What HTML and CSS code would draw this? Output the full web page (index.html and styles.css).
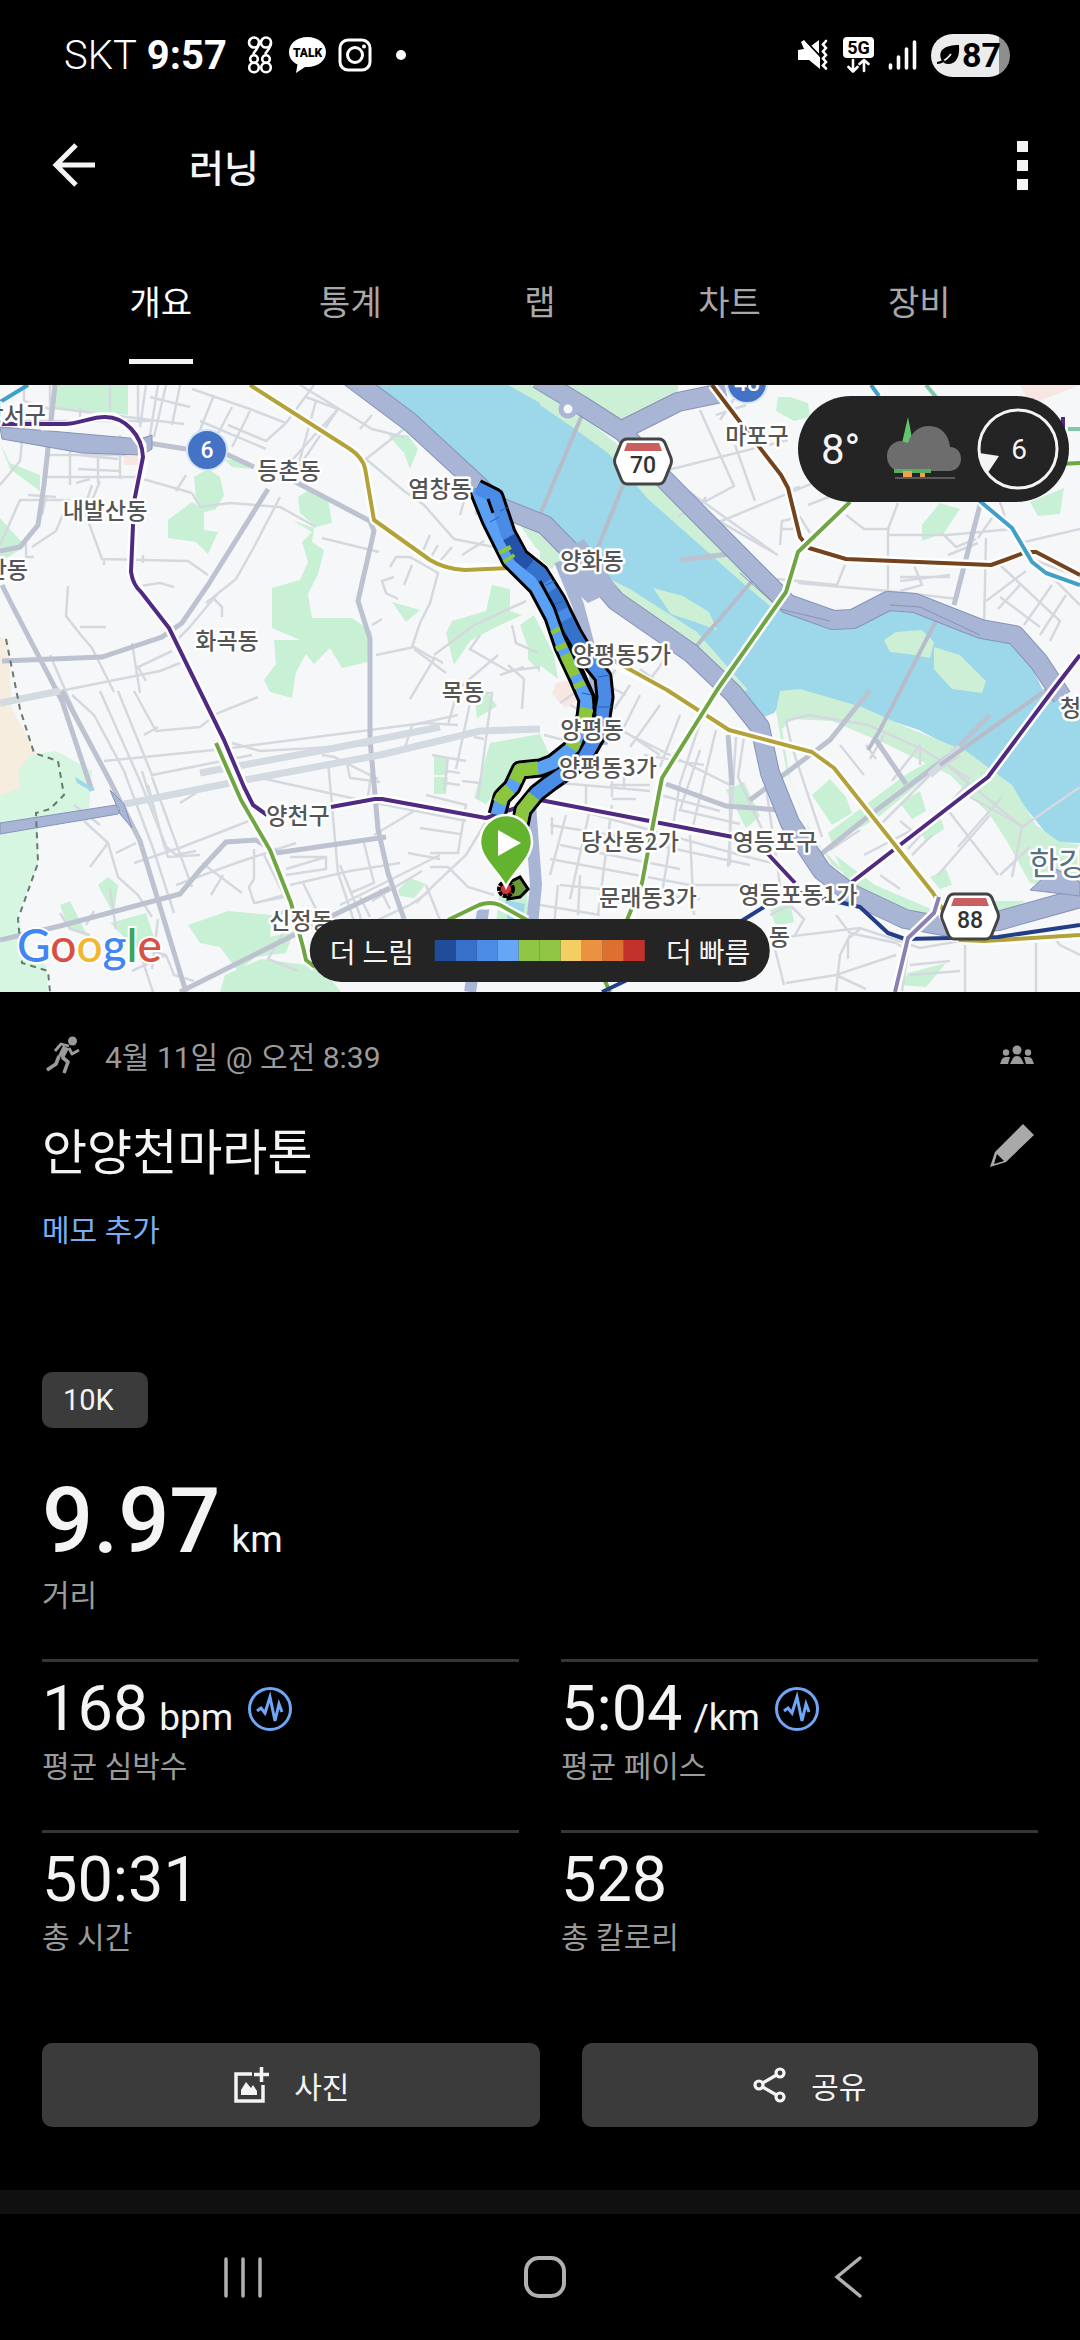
FILE: index.html
```html
<!DOCTYPE html>
<html lang="ko">
<head>
<meta charset="UTF-8">
<meta name="viewport" content="width=device-width, initial-scale=1.0">
<title>러닝</title>
<link rel="stylesheet" href="styles.css">
</head>
<body>

<div class="status-bar">
    <div class="status-left">
        <span class="carrier">SKT</span>
        <span class="clock">9:57</span>
        <svg class="icon-9988" width="26" height="38" viewBox="0 0 26 38" fill="none" stroke="#fff" stroke-width="2.6">
            <circle cx="7" cy="6.500" r="5"/><path d="M12 7c0 4-3 7-6 11"/>
            <circle cx="19" cy="6.500" r="5"/><path d="M24 7c0 4-3 7-6 11"/>
            <circle cx="7" cy="23" r="3.800"/><circle cx="7" cy="31.500" r="4.800"/>
            <circle cx="19" cy="23" r="3.800"/><circle cx="19" cy="31.500" r="4.800"/>
        </svg>
        <svg class="icon-talk" width="37" height="38" viewBox="0 0 37 38">
            <path fill="#fff" d="M18.500 1C8 1 0 7.500 0 16c0 5.500 3.300 10 8.500 12.600L7 37l9-6h2.500C29 31 37 24.500 37 16S29 1 18.500 1z"/>
            <text x="18.500" y="21" text-anchor="middle" class="talk-text">TALK</text>
        </svg>
        <svg width="34" height="34" viewBox="0 0 34 34" fill="none" stroke="#fff" stroke-width="3">
            <rect x="2" y="2" width="30" height="30" rx="8"/>
            <circle cx="17" cy="17" r="7.500"/>
            <circle cx="26" cy="8.500" r="2" fill="#fff" stroke="none"/>
        </svg>
        <span class="more-dot"></span>
    </div>
    <div class="status-right">
        <svg width="31" height="32" viewBox="0 0 31 32">
            <path fill="#fff" d="M0 11l6-1L3 3l3-2 16 17v12L11 21H0zM13 7l8-6v14z"/>
            <path fill="none" stroke="#fff" stroke-width="2.600" stroke-linecap="round" d="M28 2l-3 3.500 3 3.500-3 3.500 3 3.500-3 3.500 3 3.500-3 3.500 3 3"/>
            <path stroke="#000" stroke-width="1.500" d="M8 2l15 16"/>
        </svg>
        <svg width="31" height="36" viewBox="0 0 31 36">
            <rect width="31" height="21" rx="4" fill="#fff"/>
            <text x="15.500" y="17" text-anchor="middle" class="net-text">5G</text>
            <path fill="none" stroke="#fff" stroke-width="2.600" stroke-linecap="round" stroke-linejoin="round" d="M10 23v11M5.500 30l4.500 4.500 4.500-4.500M21 34V23M16.500 27l4.500-4 4.500 4"/>
        </svg>
        <svg width="29" height="30" viewBox="0 0 29 30" stroke="#fff" stroke-width="3.600" stroke-linecap="round">
            <path d="M2.500 25v3M10.500 17v11M18.500 9v19M26.500 2v26"/>
        </svg>
        <span class="battery">
            <svg width="23" height="22" viewBox="0 0 23 22">
                <path fill="#000" d="M4 15C1 6 8 1 22 1c1 12-3 19-11 19-2 0-4-1-5-2z"/>
                <path fill="none" stroke="#eee" stroke-width="1.800" d="M4 18c3-1 7-4 10-8"/>
                <path fill="none" stroke="#000" stroke-width="2.200" d="M0 19c3 0 5-1 7-3"/>
            </svg>
            <span>87</span>
        </span>
    </div>
</div>

<header class="app-bar">
    <button class="icon-btn" aria-label="뒤로">
        <svg width="44" height="44" viewBox="0 0 44 44" fill="none" stroke="#f4f4f4" stroke-width="5">
            <path d="M43 22H5M24 2L4 22l20 20"/>
        </svg>
    </button>
    <h1>러닝</h1>
    <button class="icon-btn" aria-label="더보기">
        <svg width="11" height="49" viewBox="0 0 11 49" fill="#f4f4f4">
            <path d="M0 0h11v11H0zM0 19h11v11H0zM0 38h11v11H0z"/>
        </svg>
    </button>
</header>

<nav class="tabs">
    <a href="#" class="active">개요</a>
    <a href="#">통계</a>
    <a href="#">랩</a>
    <a href="#">차트</a>
    <a href="#">장비</a>
</nav>

<div class="map">
    <svg class="map-canvas" viewBox="0 0 1080 607" preserveAspectRatio="xMidYMid slice">
        <rect width="1080" height="607" fill="#f6f7f8"/>

        <!-- residential blocks on the west edge -->
        <path fill="#f6eddf" d="M0 252l8 2 4 70 16 28 14 24-12 26-30 10z"/>
        <path fill="#f8e6e3" d="M124 62h14v18h-14zM1020 0h60l-50 20zM556 298l16-3 4 20-10 8-14-14z"/>

        <!-- parks -->
        <g fill="#c8f0d4">
            <path d="M54 0h74v30l-74-7z"/>
            <path d="M0 58l10 20 30 12v16l-30-22zM0 133l16 18 10 10-26 16z"/>
            <path d="M194 92l14-8 12 8 4 18-8 14-14 4-6-14zM192 117l12 8v20l14 2-10 22-12-12-28-4v-18zM224 74l20 2 6 8-18-2z"/>
            <path d="M298 112l12-8 18 10 4 24-16 4-16-14zM292 135l22 8-2 14 12 8-6 24-10 20 4 24h40l20 14-4 30-26 6-12-20-16 16-8-10-10 18-4 26-22-6-6-12 12-16-2-24h26l-28-12v-40l28-8 8-18-6-20 10-10z"/>
            <path d="M388 50h20l10 14-8 20-6-16zM392 217l28 8-14 12zM452 236l34-10 6-26 18 4v22l12 4-30 14-22 12-16 24-8-32z"/>
            <path d="M520 240l14-10 20 40 4 24-26-20zM528 262l12-8v34l-12-14zM475 315l12-8 10 14-20 12zM490 358l50-9 12 26-50 24-16 20-12-6z"/>
            <path d="M30 370l26-4 36 20-4 50 -50 5-14-10-6-44zM0 410l24-8 14 38 0 40-20 50 8 40 20 10 2 27H0z" fill="#d7f6e2"/>
            <path d="M98 500l10-8 10 8-4 30zM60 520l10-4 18 36-20-10zM110 538l36-10 8 24-20 10zM188 540l40-14 44 4-2 22 24-6-8 22-30 4-18 14-18-24-20-4zM225 590l36-16 60 8 20 25H220z"/>
            <path d="M434 372h14v18h-14zM434 392h14l-2 17h-12zM398 505l12-12 16 6-12 14-14-2z"/>
            <path d="M726 405l18-8 16 34-14 12z" />
            <path d="M500 500h26l4 40h-34z"/>
            <path d="M778 12l12 0 18 6 2 14-16 4-18-10zM922 140l18-22 20 6-16 24-22 8zM1030 117l34-14-4 26-22 2z"/>
            <path d="M770 525l20-8 4 20-18 4zM908 588l38-10-20 24-26-2z"/>
        </g>

        <!-- river -->
        <path fill="#9cd7ea" d="M361 0H540V18L581 37 623 78 657 110 753 193 784 222 833 240 850 239 884 223 912 223 974 252 1008 257 1032 283 1043 305 1080 330V458L1053 457 1025 422 970 372 919 345 850 322 788 308 774 328 764 332 733 305 691 262 616 205 580 172 540 133 475 97 410 37z"/>
        <path fill="#ccefd6" d="M508 0H578L640 0 678 0V18L640 38 612 44 581 38 540 18z"/>
        <path fill="#ccefd6" d="M540 8L581 30 616 58 653 98 753 190 784 222 776 226 745 200 648 114 608 68 575 44 540 20zM606 192L630 204 697 247 748 305 733 308 691 268 616 213z"/>
        <path fill="#ccefd6" d="M653 203l30 8 26 16 8 18-22-8-24-8zM884 255l12-8 26-2 12 12-4 16-22-4-18-2zM934 262l26 8 26 26-4 12-30-4-18-20z"/>
        <path fill="#ccefd6" d="M510 125l26 10 28 30 16 26-20-10-24-18-14-20zM540 150l20 22-8 12-12-10z"/>
        <path fill="#ccefd6" d="M776 326l4-20 20-2 62 18 44 20 60 24 46 34 24 40 22 16 22 4v42l-50-4-22-40-18-28-40-40-66-32-52-22-40-2-10 10 8 50 22 60 40 40-20-14-26-42-20-54z"/>
        <path fill="#c8f0d4" d="M812 410l18-16 16 18 6 16-20 12zM828 448l80-60 26-14 12 2-70 58-44 24zM900 418l20-12 6 20-14 8zM918 444l22-14 4 14-18 12zM930 492l16-8 6 16-12 4zM835 470l40 30 70 30 20-14 60 0-20 14-80 12-70-28z"/>

        <!-- minor streets -->
        <g class="street">
            <path d="M0 36h150M50 0v50M24 0v16l26 8M80 22v12M110 0v30M138 0v38M146 0l-6 42M158 0l-8 50M166 0l-12 52M54 23l130 16M70 50v50M98 50v48M120 50v44M46 70h80M46 92h90l56 16M48 50l100 6M78 70l40 4M78 84l42 2"/>
            <path d="M180 0l-8 40M150 12l40 10M192 4l58 20 36 14M214 10l-16 40M232 22l-20 38M250 26l-18 36M286 38l-20 18-38-16M200 36l66 28M306 12l32 12-54 60M338 24l-50 74M286 38l28-38M300 0l72 44 32 8M372 30l-12 14M404 44l-38 30 38 32 20 14 30 34 40 8"/>
            <path d="M316 16l-16 58-12 24M0 100l20-24 4-40M28 110l28 2M46 112l-4 18M186 90l-10 16M192 108l8 14 30-4 50 4 36 20M0 160l20-45 50 0M26 158l0 14 8 0M32 162l24-16 10-24"/>
            <path d="M76 98l14-4M100 96l-14 34 16 44 86 2 20 14M104 174v6M143 170v8M68 201l-2 30 14 18 12 14 22 44M80 242h26M92 100l-6 18M140 201l20-3 14 4M280 112l-26 50-18 32-30 24M214 214l8 8v10M220 206l-32 38-10 10M132 258l8 50M172 266l-34 16 8 14M60 306l100-20 20-8"/>
            <path d="M322 153l57 14M430 150l-8 18M438 160l-8 14M452 162l-12 14M390 182l6-10 14 0 28 16-8 30-10 20-8 24M412 180l-8 20M394 192l-12 4 4 12 12 6M372 240l10-6M376 270l38-8 20 12-24 40M414 264l32 24M434 270l40-30 52-24M480 250l-10 14 38 22 32-4M512 240l4 18 22 10M433 272l10 6"/>
            <path d="M462 170l22-14M460 130l4-14 12-6 0 20"/>
            <path d="M50 270l26 60M72 310l22 20 30 56 30 80 20 62M100 306l40 90 28 70M118 306l34 84 100-20M134 306l22 40 44-4 18-14 40-16M144 350l14-8M104 376l120-12 200-26 34 2M152 392l40 110M232 358l28 8 110-6M322 370l12 2 44 22M256 392l100 22 110 22M346 373l4 20 30 4M328 376l10 112 30 90M372 385l-4 26"/>
            <path d="M180 418l16-10M84 436l24 22 10 34 20 18 14 22M108 458l-18 24M116 468l20-10M134 478l48-16 72-28M100 440l-26-20M142 386l26 86 32-2M148 400l16 60 12 10 20-4M176 500l60-22 60-20M202 478l40 30M223 490l-12 20M254 464v30l-5 8 5 16 30-6M264 470l20 40-28 8M290 472h36v12l-40 6M286 484l40-12M290 500l60-14 50-8M302 496l30 60M340 480l20 50 6 44M364 458l10 40-24 10M286 522l-12 16"/>
            <path d="M60 528l10 16 20 6M86 540l8-14M110 504l6 40M130 560l36 10 8 20 20 6M158 534l-6 50M134 550l20 60M166 570l-34 16M284 546l-16 28 30 12M300 558l8 20"/>
            <path d="M458 330l-46 10-8 26M448 340l10-36 40-34M508 280l16 14-2 30M500 290l24-8"/>
            <path d="M432 370l34 6M448 372l-4 34M446 386l14 2M446 398l14 2M470 318l-14 66M474 308l18 0-14 106M474 352l10 2M462 396l18 2M420 443l40 6M426 410l40 10-8 48-28 0M408 468l32 6M424 420l-50 30M490 430l-24 40-32 30-18 18"/>
            <path d="M430 482l18 0 20 20 26 8M426 500l20 50M340 520l100-50M360 512l10 20M380 504l10 20M350 548l60-28 20-14M372 516l50-30"/>
        </g>
        <g class="street">
            <path d="M544 350l40 10M570 320l160 80M640 310l-20 40M660 320l-30 42M600 330l60 40M680 330l-20 52M700 338l-20 60-18 110M716 345l-24 100M736 352l-8 130M560 420l180 50 40 10M550 440l60 10 140 30M550 474l140 26 110 0M560 500l140 14M566 430l-16 60M590 424l-20 90M612 420l-14 110M560 460l120 24M690 450l4 80M730 360v120M560 398l90 8M610 400h40M612 390v22M624 380v24M586 400v20M552 432v18M660 410l60 16M644 370l60 10M612 414l24 0"/>
            <path d="M760 360l20 140M744 352l-6 40 32 70M700 365l-20 60 60 14M540 520l60 10M558 500l-4 40M580 490l-2 40"/>
            <path d="M560 318l26-18 12 12M612 290l14-22M606 300l20 10M630 300l-16 24M640 284l40 30M668 270l-16 22"/>
        </g>
        <g class="street">
            <path d="M668 85l120-30M700 25l34 76-56 30M716 30l30-10M740 5l-20 30M735 60l20 56M712 140l130-54M786 106l14-4M670 93l106 76M706 112l-8 12 80 46M780 160l2-24 18-4 10 16M782 144l16 0"/>
            <path d="M808 120l26-10M846 130l18 14h26M898 118l-10 26v70M845 180l-8 20-60-6M798 198l90 8 70 8M888 150h60l64-6M986 153l-2 90M942 148l14 14 20-8M948 170l30-12M950 190l-50 6M978 153l14-20M914 180l8 20-22 6M900 192h50M1000 117l10 30"/>
            <path d="M1080 144l-60 14M1026 172l54 20M1026 186l-40 30M1000 180l60 56-10 20M1040 180l40 40M1052 200l-28 40M1066 210l-26 40M1000 212l40 30M1020 200l-22 24"/>
        </g>
        <g class="street">
            <path d="M786 336l6 26 30 90M786 336l22-6 60 10 54 24 48 30M840 360l24 30M866 360l10 14M884 350l-14 24M920 360l-28 36M940 380l-60 60M942 376l80 66-10 50M968 398l-60 66M920 360l0 20M1024 442l-54-30M944 420l54 70M990 430l-52 60M1002 412l-44 50M1022 442l58-40M912 470l20-20M880 490l20 14M940 384l20-14M900 436l20 16M864 470l46-24M830 465l30-20M1000 490l30-28"/>
            <path d="M836 530l14 18 46 10 12 8-6 40M850 550l-10 20-4 36M896 570l-60 20-50 8M836 590l30 14M640 595l30-18 40-16 150-18 60 20 46-8M965 560v47M1036 558v49M1080 570l-20-10-10-12M910 580l40-4M910 590l50-4M860 544l-12 10 0 20"/>
            <path d="M770 530l20-10 14 14-10 18M774 560l10 40"/>
        </g>

        <!-- arterial roads -->
        <g class="road">
            <path d="M148 58l38 6M224 68l30 14M290 94l80 42 4 10-16 70 12 38v100l8 90 10 44 16 46"/>
            <path d="M55 0L44 100l-6 40-18 22-20 4M268 104l-60 96-26 38-20 14-60 20-100 4M2 200l10 20 50 96 30 90"/>
            <path d="M62 306l48 90 30 60 46 151M0 555l60-14 120-32 20-24 26-28 30-2 20 12M276 468l110-16M180 607l160-80 50-24"/>
            <path d="M666 399l60 22 54 4M820 470l50-40 80-60 40-40M750 415l80-60 40-50M876 355l30 44M728 350l4 50"/>
            <path d="M980 120l-26 100M680 175l48-6"/>
        </g>
        <path class="wide-road" d="M120 420l120-24 140-26 100-24 60-2M0 318l60-12M200 388l140-26 100-20"/>
        <path class="wide-road" d="M930 390l30-28"/>

        <!-- bridges -->
        <g class="bridge">
            <path d="M582 30l-42 100M623 100l-30 75M753 195l-60 70M938 232L880 345l-12 20M1046 305L940 380"/>
        </g>

        <!-- expressways -->
        <g class="highway-edge">
            <path d="M350-8L410 37 475 97 500 122 545 140 592 188 616 216 691 268 733 308 760 342 770 388 790 438 822 486 850 508 905 534 943 541 998 536 1080 513"/>
            <path d="M538-6L581 20 623 47 660 90 753 184 788 219 833 235 853 234 888 216 915 218 981 244 1015 250 1039 277 1062 312"/>
            <path d="M626 43L678 17 726 7"/>
        </g>
        <g class="highway">
            <path d="M350-8L410 37 475 97 500 122 545 140 592 188 616 216 691 268 733 308 760 342 770 388 790 438 822 486 850 508 905 534 943 541 998 536 1080 513"/>
            <path d="M538-6L581 20 623 47 660 90 753 184 788 219 833 235 853 234 888 216 915 218 981 244 1015 250 1039 277 1062 312"/>
            <path d="M626 43L678 17 726 7"/>
        </g>
        <path fill="#a9b5d4" stroke="#8793b8" d="M0 42l50 4 90 8 12-4v14l-10 6-60-2-80-14zM0 438l116-18q6 3 2 9l-118 20zM110 405l10 24 12 14-8-24zM1030 505l24-22 26 14v14z"/>
        <path class="highway highway-sm" d="M560 176l18 44 16 60 8 80M530 420l6 80-6 60M484 520l-14 87"/>
        <path fill="#a9b5d4" d="M560 168l24-14 34 50-30 14-22-20z"/>
        <path d="M740 188l40 36 50 12M890 220l30 2 60 28" stroke="#8793b8" fill="none"/>
        <circle cx="568" cy="24" r="7" fill="#f6f7f8" stroke="#a9b5d4" stroke-width="5"/>
        <path fill="none" stroke="#667a70" stroke-width="2" stroke-dasharray="6 5" d="M6 254l14 70 14 44 24 8 6 34-14 14-14 4 2 50-20 56 4 44 26 8 2 21"/>
        <path fill="#9cd7ea" d="M75 392l20 12-4 2-14-8zM505 515l20 4-4 26h-12z"/>

        <!-- subway lines -->
        <g class="subway">
            <path stroke="#fff" class="casing" d="M41 41H64L96 32H114L129 42 142 60 143 80 134 117 131 187 141 207 169 243 224 355 244 402 253 420 267 430M331 422L375 414H382L486 433 516 423 540 415 733 452M767 468L795 498M852 497L988 392 1053 305 1080 270"/>
            <path stroke="#4f2a80" d="M0 39H64C80 39 90 32 105 32C125 32 142 50 143 72L134 117 131 187Q133 200 141 207L169 243 224 355 244 402 253 420 267 430M331 422L375 414H382L486 433 516 423 540 415 733 452M767 468L795 498M852 497L988 392 1053 305 1080 270"/>
            <path stroke="#fff" class="casing" d="M250 0L356 68 365 83 374 135 430 175 448 183 510 183M600 272L667 305 729 345 812 367 834 383 933 508 953 552 984 556 1080 550"/>
            <path stroke="#b3a239" d="M250 0L350 64Q362 72 365 83L374 135 430 175Q445 184 465 185L510 183M600 268L667 305 729 345 812 367 834 383 933 508 943 525 960 555 984 556 1080 550"/>
            <path stroke="#fff" class="casing" d="M712 0L740 37 781 90 788 103 800 152 809 163 846 174 991 180 1026 167H1036L1080 190"/>
            <path stroke="#74421d" d="M712 0L740 37 781 90 788 103 800 152 809 163 846 174 991 180 1005 175 1026 167H1036L1080 190"/>
            <path stroke="#fff" class="casing" d="M850 117L798 167 786 207 717 305 662 393 659 408 642 498 629 535M216 358L241 415 270 465 291 518 303 562 306 575 315 582M448 535L479 520H499L527 535"/>
            <path stroke="#6fa644" d="M850 117L798 167 786 207 717 305 662 393 659 408 642 498 625 540 600 585 610 607M216 358L241 415 270 465 291 518 303 562 306 575 315 582M448 535L479 520Q490 516 500 520L527 535M1060 79L1080 78"/>
            <path stroke="#fff" class="casing" d="M871 0L879 11M981 117L1012 143 1032 177 1046 188 1080 200"/>
            <path stroke="#41a0c8" d="M28 0L0 17M871 0L879 11M975 112L1012 143 1032 177 1046 188 1080 200"/>
            <path stroke="#233e86" d="M602 607L623 597 743 535 764 522M800 508L860 522 888 548 905 554 998 552 1080 540"/>
            <path stroke="#fff" class="casing" d="M939 512L934 528 908 553 895 607"/>
            <path stroke="#8a82b5" d="M939 512L934 528 908 553 895 607"/>
            <path stroke="#4f2a80" d="M1063 32V60"/>
            <path stroke="#7fc8a8" d="M926 0L936 12M1068 44H1080"/>
        </g>

        <!-- run track, coloured by pace -->
        <g fill="none" stroke-linejoin="round">
            <path class="track-edge" d="M477 103L495 112 507 148 520 172 540 188 557 215 573 248 587 272 603 292 605 312 600 345 583 375 550 398 537 408 523 425 520 440"/>
            <path class="track-edge" d="M477 103L490 135 510 175 537 202 553 232 563 262 577 292 587 315 585 332 573 362 553 378 540 383 520 385 512 402 502 412 497 430"/>
            <path class="track" stroke="#5aa0f5" d="M477 103L490 135 510 175 537 202 553 232 563 262 577 292 587 315 585 332 573 362 553 378 540 383 520 385 512 402 502 412 497 430"/>
            <path class="track" stroke="#4a8be6" d="M477 103L495 112 507 148 520 172 540 188 557 215 573 248 587 272 603 292 605 312 600 345 583 375 550 398 537 408 523 425 520 440"/>
            <path class="track" stroke="#2352a8" d="M509 152L520 172 530 180"/>
            <path class="track" stroke="#3572cc" d="M530 180L540 188 546 197M551 206L557 215 562 225M566 235L573 248 580 260"/>
            <path class="track" stroke="#8cc63f" d="M504 163L506 167M508 172L510 175M556 243L558 247M561 259L563 264M566 269L576 290M579 297L581 302M587 323L585 332 583 338M576 355L571 363M538 383L520 385 515 396M510 404L502 412 499 418M534 411L523 425 520 440"/>
            <path class="track" stroke="#f3cf63" d="M583 343L581 348"/>
            <path stroke="#245eb5" d="M490 137l9-5M500 126l9-4M546 200l9-4M553 220l10-4M582 308l10 2M592 322l20 0M598 292l12-2M560 390l5 9"/>
            <path class="track-gap" d="M488 114l5 14M540 196l14 26 10 28 14 30 15 30 2 20-4 26"/>
        </g>
        <path fill="#6a9a3a" stroke="#000" stroke-width="3" d="M508 498l12-6 8 12-8 8-12 2z"/>
        <circle cx="506" cy="504" r="7" fill="#d0393a" stroke="#000" stroke-width="4" stroke-dasharray="4 1"/>
        <path fill="#64b32f" stroke="#fff" stroke-width="2.500" d="M506 502C500 488 480 474 480 457a26 27 0 0 1 52 0C532 474 512 488 506 502z"/>
        <path fill="#fff" d="M498 445l23 13-23 13z"/>

        <!-- place names -->
        <g class="place" text-anchor="middle">
            <text x="46" y="38" text-anchor="end">강서구</text>
            <text x="289" y="94">등촌동</text>
            <text x="440" y="112">염창동</text>
            <text x="105" y="134">내발산동</text>
            <text x="28" y="193" text-anchor="end">산동</text>
            <text x="227" y="264">화곡동</text>
            <text x="463" y="315">목동</text>
            <text x="592" y="184">양화동</text>
            <text x="622" y="278">양평동5가</text>
            <text x="592" y="353">양평동</text>
            <text x="608" y="391">양평동3가</text>
            <text x="298" y="439">양천구</text>
            <text x="301" y="544">신정동</text>
            <text x="630" y="465">당산동2가</text>
            <text x="648" y="521">문래동3가</text>
            <text x="775" y="465">영등포구</text>
            <text x="798" y="518">영등포동1가</text>
            <text x="790" y="560" text-anchor="end">동</text>
            <text x="757" y="59">마포구</text>
            <text x="1060" y="331" text-anchor="start">청</text>
            <text x="1029" y="490" text-anchor="start" class="river-name">한강</text>
        </g>

        <!-- route shields -->
        <g class="route-no" text-anchor="middle">
            <circle cx="207" cy="65" r="20" fill="#4472c4" stroke="#cfe3fb" stroke-width="2"/>
            <text x="207" y="73" fill="#fff">6</text>
            <circle cx="747" cy="-2" r="20" fill="#4472c4" stroke="#cfe3fb" stroke-width="2"/>
            <text x="747" y="6" fill="#fff">48</text>
            <path class="shield" d="M627 54h32q4 0 6 4l6 15q1 3 0 6l-6 15q-2 5-6 5h-32q-4 0-6-5l-6-15q-1-3 0-6l6-15q2-4 6-4z"/>
            <path fill="#c9605f" d="M627 58h32l3 8h-38z"/>
            <text x="643" y="88" fill="#333">70</text>
            <path class="shield" d="M954 509h32q4 0 6 4l6 15q1 3 0 6l-6 15q-2 5-6 5h-32q-4 0-6-5l-6-15q-1-3 0-6l6-15q2-4 6-4z"/>
            <path fill="#c9605f" d="M954 513h32l3 8h-38z"/>
            <text x="970" y="543" fill="#333">88</text>
        </g>

        <text class="map-brand" x="17" y="577"><tspan fill="#4285f4">G</tspan><tspan fill="#d94f43">o</tspan><tspan fill="#f2b632">o</tspan><tspan fill="#4285f4">g</tspan><tspan fill="#3aa757">l</tspan><tspan fill="#d94f43">e</tspan></text>
    </svg>

    <div class="weather">
        <span class="temp">8°</span>
        <svg width="76" height="64" viewBox="0 0 76 64">
            <path fill="#63c46c" d="M21 0l5 26H15z"/>
            <path fill="#6d6d6d" d="M13 54C5 54 0 47 0 39s6-15 14-15l7 2C24 16 31 9 42 9c12 0 20 9 21 21 7 0 11 5 11 12s-5 12-12 12z"/>
            <path fill="#57b060" d="M7 52h37v4H7z"/>
            <path fill="#f2a04a" d="M16 54h9v6h-9zM33 56h5v4h-5z"/>
            <path fill="#5a5a5a" d="M8 60h60v2H8z"/>
        </svg>
        <svg width="82" height="82" viewBox="0 0 82 82">
            <circle cx="41" cy="41" r="39" fill="none" stroke="#f4f4f4" stroke-width="3"/>
            <path fill="#f4f4f4" d="M2 45l20 3-12 18q-7-9-8-21z"/>
            <text x="42" y="51" text-anchor="middle" class="wind">6</text>
        </svg>
    </div>

    <div class="pace-legend">
        <span>더 느림</span>
        <div class="pace-scale">
            <i class="p1"></i><i class="p2"></i><i class="p3"></i><i class="p4"></i><i class="p5"></i>
            <i class="p5"></i><i class="p6"></i><i class="p7"></i><i class="p8"></i><i class="p9"></i>
        </div>
        <span>더 빠름</span>
    </div>
</div>

<main class="details">
    <div class="meta">
        <svg class="runner" width="42" height="38" viewBox="0 0 42 38">
            <circle cx="30.500" cy="5" r="4.500" fill="#9b9b9b"/>
            <path fill="none" stroke="#9b9b9b" stroke-width="2.800" stroke-linejoin="round" d="M27 10l-8-2-6 7M27 12l3 6 7-4"/>
            <path fill="none" stroke="#9b9b9b" stroke-width="6.500" stroke-linejoin="round" d="M24 11l-5 10"/>
            <path fill="none" stroke="#9b9b9b" stroke-width="3.600" stroke-linejoin="round" d="M20 21l6 5-4 11M17 20l-3 8-9 6"/>
        </svg>
        <span>4월 11일 @ 오전 8:39</span>
        <svg class="group" width="34" height="20" viewBox="0 0 34 20" fill="#9b9b9b">
            <circle cx="17" cy="5" r="4.500"/><circle cx="6" cy="7.500" r="3.200"/><circle cx="28" cy="7.500" r="3.200"/>
            <path d="M10 19l3-6q1-2 4-2t4 2l3 6zM0 19l2-5q1-2 4-2l4 0-2 7zM34 19l-2-5q-1-2-4-2l-4 0 2 7z"/>
        </svg>
    </div>
    <div class="title-row">
        <h2>안양천마라톤</h2>
        <button class="icon-btn" aria-label="편집">
            <svg width="44" height="44" viewBox="0 0 44 44">
                <path fill="#a9a9a9" d="M33 0l11 11-28 27L0 43l5-15z"/>
                <path fill="#000" d="M7 30l7 7-10 3z"/>
            </svg>
        </button>
    </div>
    <a href="#" class="memo">메모 추가</a>
    <div class="chip">10K</div>

    <div class="distance">
        <div class="value big"><b>9.97</b><span class="unit">km</span></div>
        <div class="label">거리</div>
    </div>

    <div class="stats">
        <div class="stat">
            <div class="value">168<span class="unit">bpm</span>
                <svg class="pulse" width="46" height="46" viewBox="0 0 46 46">
                    <circle cx="23" cy="23" r="20.500"/>
                    <path d="M10 25l4-3 4 5 5-16 5 24 4-17 3 8"/>
                </svg>
            </div>
            <div class="label">평균 심박수</div>
        </div>
        <div class="stat">
            <div class="value">5:04<span class="unit">/km</span>
                <svg class="pulse" width="46" height="46" viewBox="0 0 46 46">
                    <circle cx="23" cy="23" r="20.500"/>
                    <path d="M10 25l4-3 4 5 5-16 5 24 4-17 3 8"/>
                </svg>
            </div>
            <div class="label">평균 페이스</div>
        </div>
        <div class="stat">
            <div class="value">50:31</div>
            <div class="label">총 시간</div>
        </div>
        <div class="stat">
            <div class="value">528</div>
            <div class="label">총 칼로리</div>
        </div>
    </div>

    <div class="actions">
        <button>
            <svg width="38" height="38" viewBox="0 0 38 38">
                <path fill="none" stroke="#f4f4f4" stroke-width="3.500" d="M20 8H4v27h27V19"/>
                <path fill="none" stroke="#f4f4f4" stroke-width="3.500" d="M29.500 1v15M22 8.500h15"/>
                <path fill="#f4f4f4" d="M9 29v-5l5-8 5 6 2-3 4 6v4z"/>
            </svg>
            사진
        </button>
        <button>
            <svg width="34" height="38" viewBox="0 0 34 38" fill="none" stroke="#f4f4f4" stroke-width="3.200">
                <circle cx="27" cy="7" r="4"/><circle cx="6" cy="19" r="4"/><circle cx="27" cy="31" r="4"/>
                <path d="M9.500 17l14-8M9.500 21l14 8"/>
            </svg>
            공유
        </button>
    </div>
</main>

<div class="section-gap"></div>

<nav class="system-nav">
    <button aria-label="최근 앱">
        <svg width="40" height="42" viewBox="0 0 40 42" stroke="#b0b0b0" stroke-width="3.500" stroke-linecap="round">
            <path d="M3 3v37M20 3v37M37 3v37"/>
        </svg>
    </button>
    <button aria-label="홈">
        <svg width="44" height="44" viewBox="0 0 44 44" fill="none" stroke="#b0b0b0" stroke-width="4">
            <rect x="3" y="3" width="38" height="38" rx="13"/>
        </svg>
    </button>
    <button aria-label="뒤로">
        <svg width="28" height="44" viewBox="0 0 28 44" fill="none" stroke="#b0b0b0" stroke-width="3.500" stroke-linecap="round">
            <path d="M26 3L3 22l23 19"/>
        </svg>
    </button>
</nav>

</body>
</html>
```
FILE: styles.css
```css
* {
    box-sizing: border-box;
}
body {
    margin: 0;
    background-color: #000;
    color: #f4f4f4;
    font-family: Roboto, "Noto Sans CJK KR", sans-serif;
    font-size: 30px;
}
h1, h2 {
    margin: 0;
    font-weight: 500;
}
a {
    text-decoration: none;
}
button {
    border: none;
    padding: 0;
    background: none;
    color: inherit;
    font: inherit;
    cursor: pointer;
}
svg {
    display: block;
    flex: none;
}

/* status bar */
.status-bar {
    display: flex;
    justify-content: space-between;
    align-items: center;
    height: 110px;
    padding: 0 70px 0 64px;
}
.status-left, .status-right {
    display: flex;
    align-items: center;
    color: #fff;
}
.carrier {
    font-size: 40px;
    font-weight: 300;
}
.clock {
    font-size: 40px;
    font-weight: 700;
    margin: 0 20px 0 10px;
}
.icon-talk {
    margin: 0 12px 0 16px;
}
.talk-text {
    font-size: 12px;
    font-weight: 900;
}
.net-text {
    font-size: 18px;
    font-weight: 700;
}
.more-dot {
    width: 10px;
    height: 10px;
    margin-left: 24px;
    border-radius: 50%;
    background-color: #fff;
}
.status-right {
    gap: 14px;
}
.battery {
    display: flex;
    align-items: center;
    gap: 2px;
    width: 79px;
    height: 43px;
    padding-left: 6px;
    border-radius: 22px;
    background: linear-gradient(90deg, #ececec 86%, #8e8e8e 86%);
    color: #000;
    font-size: 34px;
    font-weight: 700;
}

/* app bar and tabs */
.app-bar {
    display: flex;
    align-items: center;
    height: 110px;
    padding: 0 52px;
}
.app-bar h1 {
    flex: 1;
    margin-left: 93px;
    font-size: 38px;
}
.tabs {
    display: flex;
    justify-content: space-around;
    height: 165px;
    padding: 0 66px;
}
.tabs a {
    flex: 1;
    display: flex;
    flex-direction: column;
    align-items: center;
    padding-top: 58px;
    color: #a8a8a8;
    font-size: 34px;
    line-height: 50px;
}
.tabs .active {
    color: #fff;
}
.tabs .active::after {
    content: "";
    width: 64px;
    height: 5px;
    margin-top: 31px;
    background-color: #f4f4f4;
}

/* map */
.map {
    position: relative;
}
.map-canvas {
    width: 100%;
    height: auto;
}
.street {
    fill: none;
    stroke: #d5d9df;
    stroke-width: 2.5;
}
.road {
    fill: none;
    stroke: #bcc2cf;
    stroke-width: 5;
}
.wide-road {
    fill: none;
    stroke: #d3dae2;
    stroke-width: 7;
}
.bridge {
    fill: none;
    stroke: #b7bccb;
    stroke-width: 4;
}
.highway-edge {
    fill: none;
    stroke: #8793b8;
    stroke-width: 20;
    stroke-linejoin: round;
}
.highway {
    fill: none;
    stroke: #a9b5d4;
    stroke-width: 18;
    stroke-linejoin: round;
}
.highway.highway-sm {
    stroke-width: 12;
}
.subway {
    fill: none;
    stroke-width: 4;
    stroke-linejoin: round;
}
.subway .casing {
    stroke-width: 9;
}
.track-edge {
    stroke: #000;
    stroke-width: 19;
}
.track {
    stroke-width: 13;
}
.track-gap {
    stroke: #000;
    stroke-width: 3;
}
.place {
    font-family: "Noto Sans CJK KR", sans-serif;
    font-size: 23px;
    font-weight: 500;
    fill: #555;
    stroke: #fff;
    stroke-width: 5;
    stroke-linejoin: round;
    paint-order: stroke;
}
.river-name {
    font-size: 32px;
    font-weight: 400;
    fill: #56707f;
}
.route-no {
    font-size: 23px;
    font-weight: 500;
}
.shield {
    fill: #fff;
    stroke: #444;
    stroke-width: 3;
}
.map-brand {
    font-family: Lato, sans-serif;
    font-size: 46px;
    font-weight: 500;
    stroke: #fff;
    stroke-width: 4;
    paint-order: stroke;
}
.weather {
    position: absolute;
    top: 11px;
    right: 11px;
    display: flex;
    align-items: center;
    height: 106px;
    padding: 0 10px 0 23px;
    border-radius: 53px;
    background-color: #242424;
}
.temp {
    width: 66px;
    font-size: 42px;
}
.weather svg + svg {
    margin-left: 14px;
}
.wind {
    font-size: 28px;
    fill: #f4f4f4;
}
.pace-legend {
    position: absolute;
    left: 50%;
    bottom: 10px;
    transform: translateX(-50%);
    display: flex;
    align-items: center;
    gap: 21px;
    height: 63px;
    padding: 0 20px;
    border-radius: 32px;
    background-color: #242424;
    font-size: 28px;
    white-space: nowrap;
}
.pace-scale {
    display: flex;
}
.pace-scale i {
    width: 21px;
    height: 21px;
}
.p1 { background-color: #214c9c; }
.p2 { background-color: #3671c9; }
.p3 { background-color: #4d8ce6; }
.p4 { background-color: #67a5f7; }
.p5 { background-color: #8fc744; }
.p6 { background-color: #f3cf63; }
.p7 { background-color: #ea9142; }
.p8 { background-color: #dd6f31; }
.p9 { background-color: #c2322b; }

/* activity details */
.details {
    padding: 40px 42px 63px;
}
.meta {
    display: flex;
    align-items: center;
    height: 46px;
    color: #9b9b9b;
}
.meta span {
    flex: 1;
    margin-left: 21px;
}
.group {
    margin-right: 4px;
}
.title-row {
    display: flex;
    justify-content: space-between;
    align-items: flex-start;
    margin: 46px 4px 25px 0;
}
.title-row h2 {
    font-size: 49px;
    font-weight: 400;
    line-height: 60px;
}
.memo {
    display: block;
    color: #79adf8;
    font-size: 30px;
    line-height: 44px;
}
.chip {
    width: fit-content;
    margin: 119px 0 44px;
    padding: 0 34px 0 21px;
    border-radius: 10px;
    background-color: #3b3b3b;
    font-size: 29px;
    line-height: 56px;
}
.value {
    display: flex;
    align-items: baseline;
    font-size: 63px;
    line-height: 76px;
}
.value.big {
    margin-bottom: 4px;
    font-size: 90px;
    line-height: 100px;
}
.value b {
    font-weight: 500;
}
.unit {
    margin-left: 11px;
    font-size: 37px;
    line-height: 40px;
}
.pulse {
    align-self: center;
    margin-left: 14px;
    fill: none;
    stroke: #6fa6f5;
    stroke-width: 3;
}
.label {
    color: #9b9b9b;
    font-size: 30px;
    line-height: 40px;
}
.distance {
    padding-bottom: 43px;
}
.stats {
    display: grid;
    grid-template-columns: 1fr 1fr;
    column-gap: 42px;
}
.stat {
    padding: 9px 0 43px;
    border-top: 3px solid #363636;
}
.actions {
    display: grid;
    grid-template-columns: 12fr 11fr;
    gap: 42px;
    margin-top: 42px;
}
.actions button {
    display: flex;
    justify-content: center;
    align-items: center;
    gap: 24px;
    height: 84px;
    border-radius: 10px;
    background-color: #3b3b3b;
}

.section-gap {
    height: 24px;
    background-color: #101010;
}
.system-nav {
    display: flex;
    height: 126px;
    padding: 0 7.5% 0 8.5%;
}
.system-nav button {
    flex: 1;
    display: flex;
    justify-content: center;
    align-items: center;
}
```
